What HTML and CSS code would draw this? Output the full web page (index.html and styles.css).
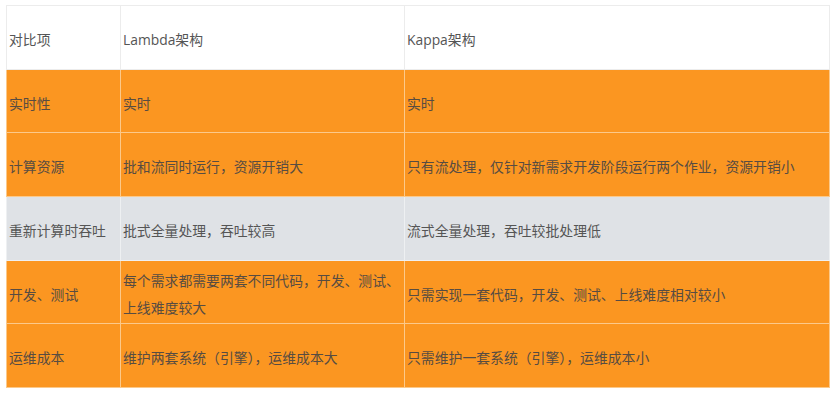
FILE: index.html
```html
<!DOCTYPE html>
<html lang="zh">
<head>
<meta charset="utf-8">
<link rel="stylesheet" href="styles.css">
</head>
<body>
<table class="cmp">
  <colgroup><col class="c1"><col class="c2"><col class="c3"></colgroup>
  <tr class="head"><td>对比项</td><td>Lambda架构</td><td>Kappa架构</td></tr>
  <tr class="orange"><td>实时性</td><td>实时</td><td>实时</td></tr>
  <tr class="orange"><td>计算资源</td><td>批和流同时运行，资源开销大</td><td>只有流处理，仅针对新需求开发阶段运行两个作业，资源开销小</td></tr>
  <tr class="gray"><td>重新计算时吞吐</td><td>批式全量处理，吞吐较高</td><td>流式全量处理，吞吐较批处理低</td></tr>
  <tr class="orange"><td>开发、测试</td><td>每个需求都需要两套不同代码，开发、测试、上线难度较大</td><td>只需实现一套代码，开发、测试、上线难度相对较小</td></tr>
  <tr class="orange"><td>运维成本</td><td>维护两套系统（引擎），运维成本大</td><td>只需维护一套系统（引擎），运维成本小</td></tr>
</table>
</body>
</html>
```
FILE: styles.css
```css
html, body { margin: 0; padding: 0; background: #fff; }
body { padding: 5px 0 0 6px; }
.cmp {
  border-collapse: collapse;
  table-layout: fixed;
  width: 823px;
  font-family: "Open Sans", "Noto Sans CJK SC", sans-serif;
  font-size: 13.85px;
  color: #555;
}
.c1 { width: 114px; }
.c2 { width: 284px; }
.c3 { width: 425px; }
.cmp td {
  height: 58.7px;
  padding: 4px 0 0 2px;
  line-height: 27px;
  vertical-align: middle;
  border: 1px solid #ececec;
}
.cmp tr.head td { background: #fff; border-color: #ececec; }
.cmp tr.orange td { background: #fb9621; border-color: #fcc98a; color: #574c42; }
.cmp tr.gray td { background: #dfe2e6; border-color: #eef0f2; }
```
